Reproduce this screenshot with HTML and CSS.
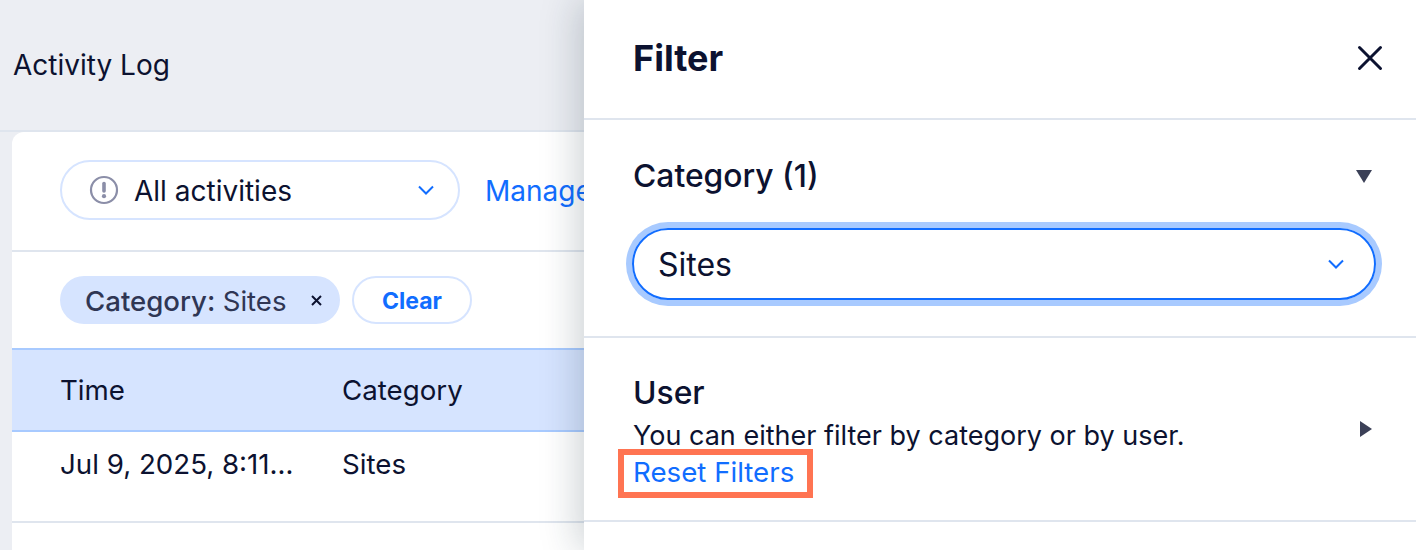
FILE: index.html
```html
<!DOCTYPE html>
<html lang="en">
<head>
    <meta charset="UTF-8">
    <meta name="viewport" content="width=device-width, initial-scale=1.0">
    <title>Activity Log</title>
    <link rel="stylesheet" href="styles.css">
</head>
<body>
    <div class="page">
        <header class="page-header">Activity Log</header>
        <main class="card">
            <div class="toolbar">
                <div class="activity-select">
                    <svg class="alert-icon" width="30" height="30" viewBox="0 0 30 30">
                        <circle cx="15" cy="15" r="13" fill="none" stroke="#8b8ea8" stroke-width="2.2"/>
                        <path d="M15 8.5v7.5" fill="none" stroke="#8b8ea8" stroke-width="3.6" stroke-linecap="round"/>
                        <circle cx="15" cy="21.2" r="2.1" fill="#8b8ea8"/>
                    </svg>
                    <span class="activity-label">All activities</span>
                    <svg class="chevron" width="18" height="12" viewBox="0 0 18 12">
                        <path d="M2 2.5l7 7 7-7" fill="none" stroke="#116dff" stroke-width="2"/>
                    </svg>
                </div>
                <a class="manage-link">Manage</a>
            </div>
            <div class="chips">
                <div class="chip">
                    <span class="chip-label">Category: <span class="chip-value">Sites</span></span>
                    <svg width="13" height="13" viewBox="0 0 13 13">
                        <path d="M2 2l9 9M11 2l-9 9" fill="none" stroke="#0c1230" stroke-width="2"/>
                    </svg>
                </div>
                <button class="clear-btn">Clear</button>
            </div>
            <div class="table-row table-head">
                <div class="col-time">Time</div>
                <div class="col-category">Category</div>
            </div>
            <div class="table-row table-body">
                <div class="col-time">Jul 9, 2025, 8:11…</div>
                <div class="col-category">Sites</div>
            </div>
        </main>
    </div>

    <aside class="panel">
        <div class="panel-head">
            <h1 class="panel-title">Filter</h1>
            <svg class="close-icon" width="26" height="26" viewBox="0 0 26 26">
                <path d="M2.5 2.5l21 21M23.5 2.5l-21 21" fill="none" stroke="#0c1230" stroke-width="3" stroke-linecap="round"/>
            </svg>
        </div>
        <section class="panel-section category-section">
            <div class="section-top">
                <h2 class="section-title">Category (1)</h2>
                <span class="arrow-down"></span>
            </div>
            <div class="site-select">
                <span class="site-value">Sites</span>
                <svg width="18" height="12" viewBox="0 0 18 12">
                    <path d="M2 2.5l7 7 7-7" fill="none" stroke="#116dff" stroke-width="2"/>
                </svg>
            </div>
        </section>
        <section class="panel-section user-section">
            <div class="user-text">
                <h2 class="section-title">User</h2>
                <p class="user-note">You can either filter by category or by user.</p>
                <a class="reset-link">Reset Filters</a>
            </div>
            <span class="arrow-right"></span>
        </section>
    </aside>
</body>
</html>
```

FILE: styles.css
```css
html, body {
    margin: 0;
    height: 100%;
}
body {
    position: relative;
    overflow: hidden;
    background: #eceef3;
    color: #0c1230;
    font-family: Inter, "Noto Sans", sans-serif;
}
.page-header {
    box-sizing: border-box;
    height: 132px;
    padding: 47px 0 0 13px;
    font-size: 28px;
    line-height: 36px;
    border-bottom: 2px solid #dfe5ee;
}
.card {
    margin-left: 12px;
    height: 418px;
    background: #fff;
    border-top-left-radius: 12px;
}
.toolbar {
    display: flex;
    align-items: center;
    height: 120px;
    box-sizing: border-box;
    padding: 0 0 2px 48px;
    border-bottom: 2px solid #dfe5ee;
    gap: 25px;
    white-space: nowrap;
}
.activity-select {
    display: flex;
    align-items: center;
    box-sizing: border-box;
    width: 400px;
    height: 60px;
    padding: 0 23px 0 27px;
    border: 2px solid #d6e4ff;
    border-radius: 30px;
}
.alert-icon {
    margin-right: 15px;
}
.activity-label {
    flex: 1;
    padding-top: 2px;
    font-size: 28px;
}
.manage-link {
    padding-top: 2px;
    font-size: 28px;
    color: #116dff;
}
.chips {
    display: flex;
    align-items: center;
    gap: 12px;
    height: 96px;
    padding-left: 48px;
    box-sizing: border-box;
}
.chip {
    display: flex;
    align-items: center;
    box-sizing: border-box;
    width: 280px;
    height: 48px;
    padding: 0 17px 0 25px;
    justify-content: space-between;
    background: #d6e4ff;
    border-radius: 24px;
    font-size: 27.6px;
    color: #2f3654;
}
.chip-label {
    padding-top: 1px;
    font-weight: 500;
}
.chip-value {
    font-weight: 400;
}
.clear-btn {
    width: 120px;
    height: 48px;
    padding: 2px 0 0;
    background: #fff;
    border: 2px solid #d6e4ff;
    border-radius: 24px;
    color: #116dff;
    font-family: inherit;
    font-size: 23px;
    font-weight: 700;
}
.table-row {
    display: flex;
    align-items: center;
    padding-left: 48px;
    font-size: 27.7px;
}
.table-head {
    height: 84px;
    box-sizing: border-box;
    background: #d6e4ff;
    border-top: 2px solid #a8caff;
    border-bottom: 2px solid #a8caff;
}
.table-body {
    height: 91px;
    box-sizing: border-box;
    padding-bottom: 26px;
    border-bottom: 2px solid #dfe5ee;
}
.col-time {
    width: 282px;
}
.panel {
    position: absolute;
    top: 0;
    right: 0;
    bottom: 0;
    width: 832px;
    background: #fff;
    box-shadow: -6px 0 36px rgba(22, 45, 61, 0.22);
}
.panel-head {
    display: flex;
    align-items: center;
    justify-content: space-between;
    box-sizing: border-box;
    height: 120px;
    padding: 0 33px 2px 49px;
    border-bottom: 2px solid #dfe5ee;
}
.panel-title {
    margin: 0;
    font-size: 36px;
    font-weight: 700;
}
.panel-section {
    box-sizing: border-box;
    border-bottom: 2px solid #dfe5ee;
    padding-left: 49px;
}
.category-section {
    height: 218px;
    padding-top: 36px;
}
.section-top {
    display: flex;
    align-items: center;
    justify-content: space-between;
    padding-right: 44px;
}
.section-title {
    margin: 0;
    font-size: 31.8px;
    font-weight: 500;
    line-height: 40px;
}
.arrow-down {
    width: 0;
    height: 0;
    border-left: 8px solid transparent;
    border-right: 8px solid transparent;
    border-top: 13px solid #3b4057;
}
.site-select {
    display: flex;
    align-items: center;
    justify-content: space-between;
    box-sizing: border-box;
    width: 744px;
    height: 72px;
    margin: 32px 0 0 -1px;
    padding: 0 29px 0 24px;
    border: 2px solid #116dff;
    border-radius: 36px;
    box-shadow: 0 0 0 6px #a8caff;
    font-size: 32px;
}
.site-value {
    padding-top: 1px;
}
.user-section {
    display: flex;
    align-items: flex-start;
    justify-content: space-between;
    height: 184px;
    padding-top: 35px;
    padding-right: 44px;
}
.user-note {
    margin: 5px 0 0;
    font-size: 27px;
    line-height: 36px;
}
.reset-link {
    display: block;
    position: relative;
    width: fit-content;
    margin-top: -1px;
    font-size: 27.7px;
    line-height: 38px;
    color: #116dff;
}
/* highlight box drawn over the link */
.reset-link::after {
    content: "";
    position: absolute;
    top: -4px;
    right: -19px;
    bottom: -7px;
    left: -15px;
    border: 6px solid #ff7452;
}
.arrow-right {
    width: 0;
    height: 0;
    margin-top: 48px;
    border-top: 8px solid transparent;
    border-bottom: 8px solid transparent;
    border-left: 12px solid #3b4057;
}
```
